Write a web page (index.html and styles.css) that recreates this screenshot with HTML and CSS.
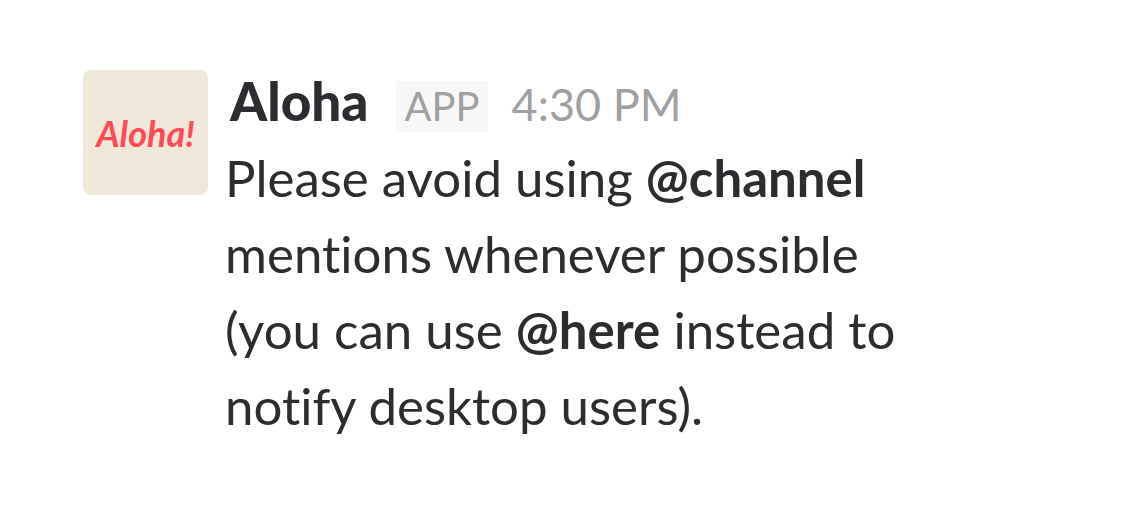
FILE: index.html
```html
<!DOCTYPE html>
<html lang="en">
<head>
<meta charset="utf-8">
<meta name="viewport" content="width=device-width, initial-scale=1">
<title>Aloha</title>
<link rel="stylesheet" href="styles.css">
</head>
<body>
<article class="message">
  <div class="avatar">
    <span class="avatar-text">Aloha!</span>
  </div>
  <div class="content">
    <header class="meta">
      <strong class="sender">Aloha</strong>
      <span class="badge">APP</span>
      <time class="time" datetime="16:30">4:30 PM</time>
    </header>
    <p class="text">Please avoid using <strong>@channel</strong> mentions whenever possible (you can use <strong>@here</strong> instead to notify desktop users).</p>
  </div>
</article>
</body>
</html>
```
FILE: styles.css
```css
body {
  margin: 0;
  background: #fff;
  color: #2c2d30;
  font-family: Lato, sans-serif;
  font-variant-ligatures: none;
}

.message {
  display: flex;
  gap: 17px;
  padding: 65px 83px;
}

.avatar {
  display: flex;
  flex: none;
  align-items: center;
  justify-content: center;
  width: 125px;
  height: 125px;
  margin-top: 5px;
  border-radius: 8px;
  background: #efe8d8;
}

.avatar-text {
  color: #ff4b58;
  font-size: 36px;
  font-style: italic;
  font-weight: 700;
}

.content {
  max-width: 700px;
}

.meta {
  display: flex;
  align-items: baseline;
  padding-left: 5px;
  line-height: 72px;
}

.sender {
  font-size: 53px;
  font-weight: 900;
}

.badge {
  margin-left: 28px;
  padding: 0 8px;
  border-radius: 2px;
  background: #f7f7f7;
  color: #a0a0a2;
  font-size: 40px;
  line-height: 51px;
}

.time {
  margin-left: 24px;
  color: #a0a0a2;
  font-size: 45px;
}

.text {
  margin: 0;
  font-size: 51px;
  line-height: 76px;
}
```
